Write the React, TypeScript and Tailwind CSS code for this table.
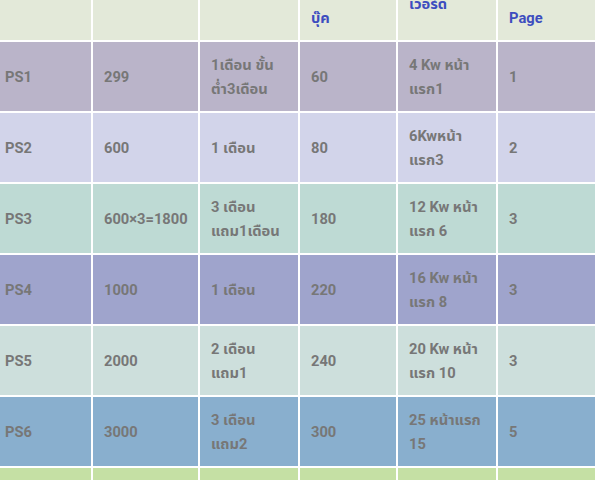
import React from "react";

interface PackageRow {
  code: string;
  price: string;
  period: string;
  book: string;
  keyword: string;
  page: string;
  bg: string;
}

const rows: PackageRow[] = [
  { code: "PS1", price: "299", period: "1เดือน ขั้น ต่ำ3เดือน", book: "60", keyword: "4 Kw หน้า แรก1", page: "1", bg: "bg-[#bab4c9]" },
  { code: "PS2", price: "600", period: "1 เดือน", book: "80", keyword: "6Kwหน้า แรก3", page: "2", bg: "bg-[#d2d4ea]" },
  { code: "PS3", price: "600×3=1800", period: "3 เดือน แถม1เดือน", book: "180", keyword: "12 Kw หน้า แรก 6", page: "3", bg: "bg-[#bedad4]" },
  { code: "PS4", price: "1000", period: "1 เดือน", book: "220", keyword: "16 Kw หน้า แรก 8", page: "3", bg: "bg-[#9fa4cc]" },
  { code: "PS5", price: "2000", period: "2 เดือน แถม1", book: "240", keyword: "20 Kw หน้า แรก 10", page: "3", bg: "bg-[#cddfdc]" },
  { code: "PS6", price: "3000", period: "3 เดือน แถม2", book: "300", keyword: "25 หน้าแรก 15", page: "5", bg: "bg-[#89afce]" },
  { code: "", price: "", period: "", book: "", keyword: "", page: "", bg: "bg-[#c5e0a4]" },
];

export default function App() {
  return (
    <div
      className="h-[480px] w-[595px] overflow-hidden bg-white"
      style={{ fontFamily: "Roboto, 'Noto Sans Thai', 'Noto Sans', sans-serif" }}
    >
      <div className="-ml-[6px] -mt-[24px] grid w-[720px] grid-cols-[97px_105px_98px_96px_98px_120px] gap-[2px] bg-white text-[14.7px] leading-[24px] font-bold">
        {/* header, top part is scrolled out of view */}
        <div className="h-[64px] bg-[#e3e9d9]"></div>
        <div className="h-[64px] bg-[#e3e9d9]"></div>
        <div className="h-[64px] bg-[#e3e9d9]"></div>
        <div className="flex h-[64px] flex-col justify-end bg-[#e3e9d9] px-[11px] pb-[10px] text-[#3d4dbf]">
          <span>เฟซ</span>
          <span>บุ๊ค</span>
        </div>
        <div className="flex h-[64px] flex-col justify-end bg-[#e3e9d9] px-[11px] pb-[24px] text-[#3d4dbf]">
          <span>คีย์</span>
          <span>เวอร์ด</span>
        </div>
        <div className="flex h-[64px] flex-col justify-end bg-[#e3e9d9] px-[11px] pb-[10px] text-[#3d4dbf]">
          <span>Page</span>
        </div>

        {rows.map((row, index) => {
          const cells = [row.code, row.price, row.period, row.book, row.keyword, row.page];
          return cells.map((text, i) => (
            <div
              key={`${index}-${i}`}
              className={`flex h-[69px] items-center px-[11px] text-[#777777] ${row.bg}`}
            >
              <span>{text}</span>
            </div>
          ));
        })}
      </div>
    </div>
  );
}
